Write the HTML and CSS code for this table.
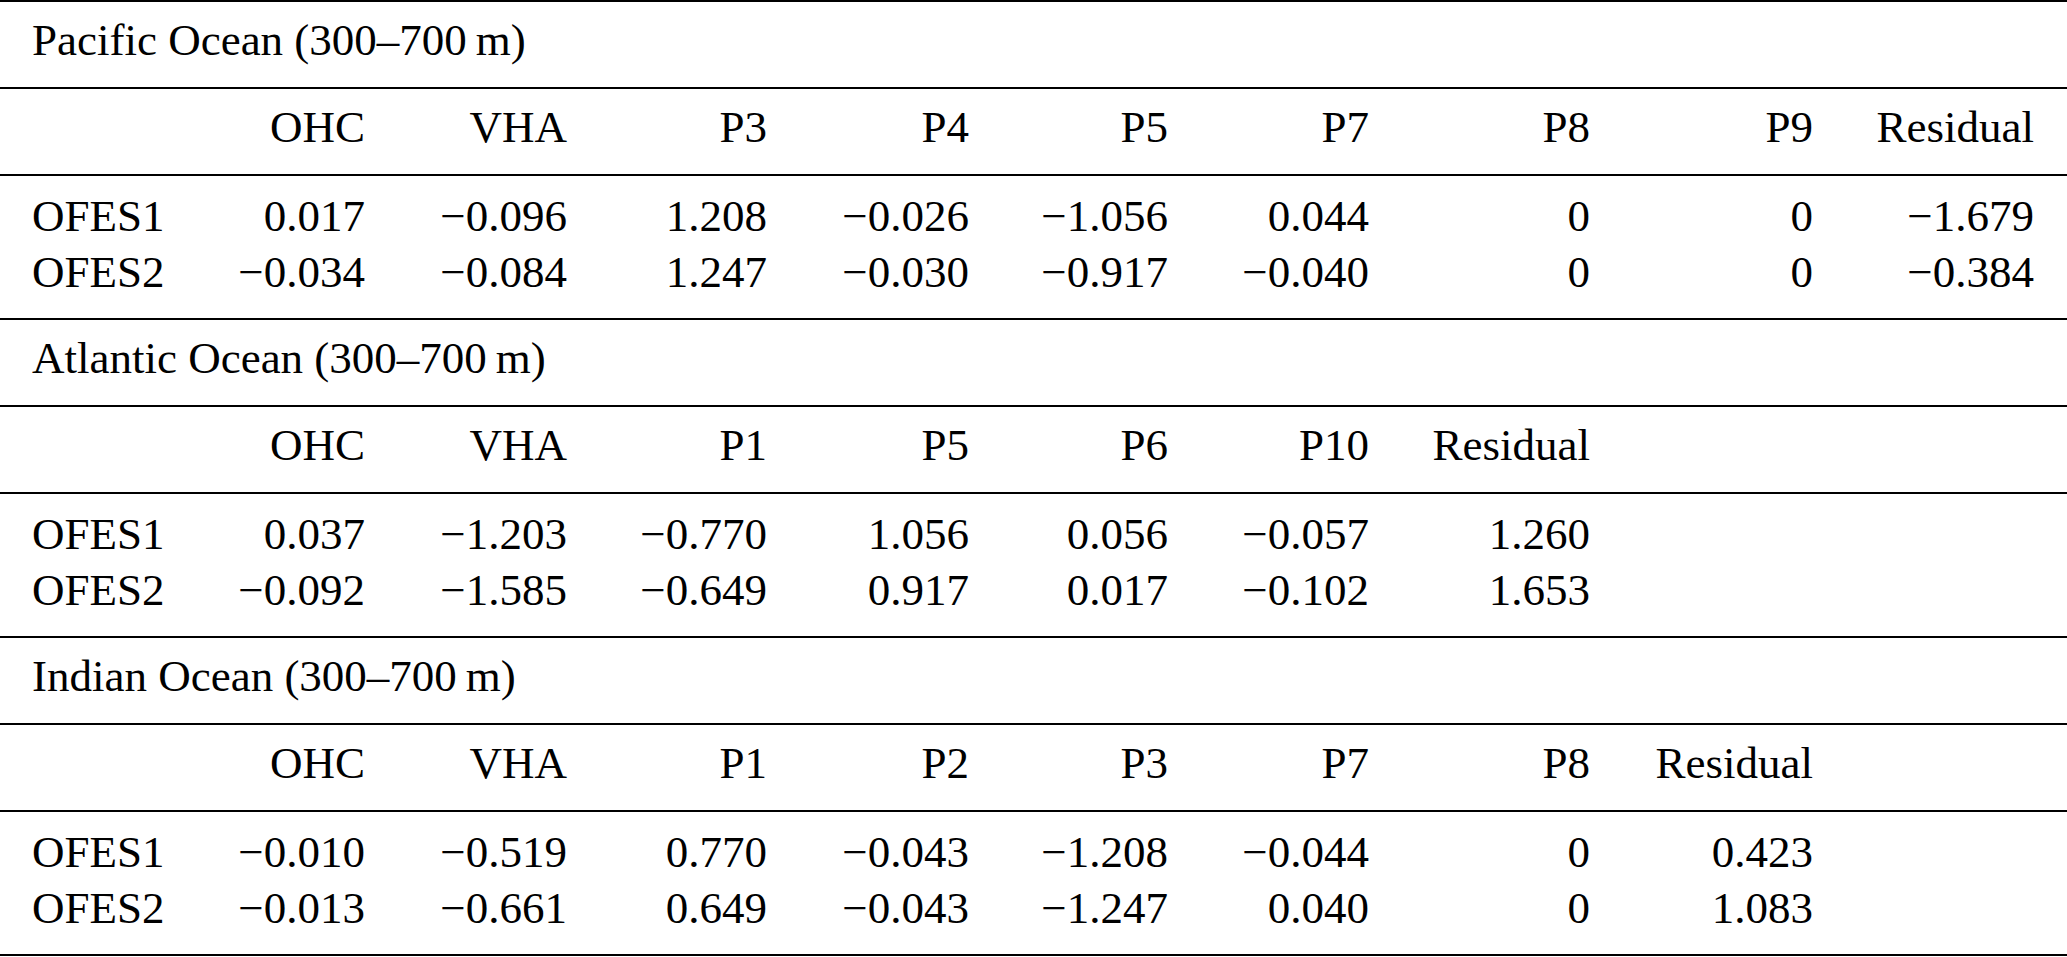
FILE: index.html
```html
<!DOCTYPE html>
<html lang="en">
<head>
<meta charset="utf-8">
<title>Ocean heat budget</title>
<link rel="stylesheet" href="styles.css">
</head>
<body>
<div class="table">
  <section class="section">
    <div class="title">Pacific Ocean (300–700&#8201;m)</div>
    <div class="row head"><span></span><span>OHC</span><span>VHA</span><span>P3</span><span>P4</span><span>P5</span><span>P7</span><span>P8</span><span>P9</span><span>Residual</span></div>
    <div class="data">
      <div class="row"><span class="lbl">OFES1</span><span>0.017</span><span>−0.096</span><span>1.208</span><span>−0.026</span><span>−1.056</span><span>0.044</span><span>0</span><span>0</span><span>−1.679</span></div>
      <div class="row"><span class="lbl">OFES2</span><span>−0.034</span><span>−0.084</span><span>1.247</span><span>−0.030</span><span>−0.917</span><span>−0.040</span><span>0</span><span>0</span><span>−0.384</span></div>
    </div>
  </section>
  <section class="section">
    <div class="title">Atlantic Ocean (300–700&#8201;m)</div>
    <div class="row head"><span></span><span>OHC</span><span>VHA</span><span>P1</span><span>P5</span><span>P6</span><span>P10</span><span>Residual</span></div>
    <div class="data">
      <div class="row"><span class="lbl">OFES1</span><span>0.037</span><span>−1.203</span><span>−0.770</span><span>1.056</span><span>0.056</span><span>−0.057</span><span>1.260</span></div>
      <div class="row"><span class="lbl">OFES2</span><span>−0.092</span><span>−1.585</span><span>−0.649</span><span>0.917</span><span>0.017</span><span>−0.102</span><span>1.653</span></div>
    </div>
  </section>
  <section class="section">
    <div class="title">Indian Ocean (300–700&#8201;m)</div>
    <div class="row head"><span></span><span>OHC</span><span>VHA</span><span>P1</span><span>P2</span><span>P3</span><span>P7</span><span>P8</span><span>Residual</span></div>
    <div class="data">
      <div class="row"><span class="lbl">OFES1</span><span>−0.010</span><span>−0.519</span><span>0.770</span><span>−0.043</span><span>−1.208</span><span>−0.044</span><span>0</span><span>0.423</span></div>
      <div class="row"><span class="lbl">OFES2</span><span>−0.013</span><span>−0.661</span><span>0.649</span><span>−0.043</span><span>−1.247</span><span>0.040</span><span>0</span><span>1.083</span></div>
    </div>
  </section>
</div>
</body>
</html>
```

FILE: styles.css
```css
html, body {
  margin: 0;
  padding: 0;
  background: #fff;
}

body {
  font-family: "Liberation Serif", "Times New Roman", serif;
  font-size: 45px;
  color: #000;
}

.table {
  width: 2067px;
  border-top: 2px solid #000;
}

.section {
  border-bottom: 2px solid #000;
}

.title {
  line-height: 56px;
  padding: 10px 0 19px 32px;
  white-space: nowrap;
}

.row {
  display: grid;
  grid-template-columns: 131px 202px 202px 200px 202px 199px 201px 221px 223px 221px;
  padding-left: 32px;
  line-height: 56px;
  white-space: nowrap;
}

.row span {
  text-align: right;
}

.row .lbl {
  text-align: left;
}

.head {
  padding-top: 10px;
  padding-bottom: 19px;
  border-top: 2px solid #000;
  border-bottom: 2px solid #000;
}

.data {
  padding: 12px 0 18px;
}
```
